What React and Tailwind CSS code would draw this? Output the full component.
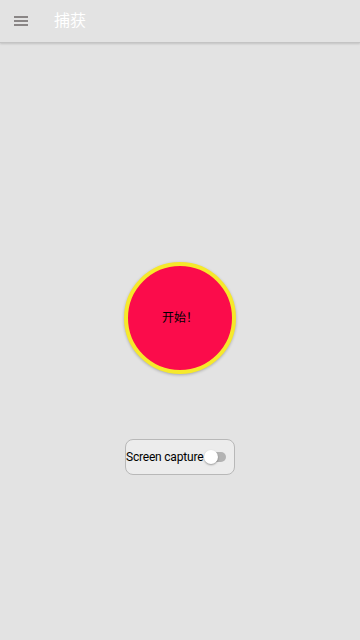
import { useState } from 'react';

export default function App() {
  const [on, setOn] = useState(false);

  return (
    <div className="w-[360px] h-[640px] bg-[#e3e3e3] flex flex-col" style={{ fontFamily: 'Roboto, "Noto Sans CJK SC", sans-serif' }}>
      {/* Header */}
      <header className="h-[43px] flex items-center border-b border-[#c4c4c4] shadow-[0_1px_2px_rgba(0,0,0,0.15)] bg-[#e3e3e3]">
        <button className="ml-[14px] w-[14px] flex flex-col gap-[2px]">
          <span className="block h-[2px] bg-[#8a8686]" />
          <span className="block h-[2px] bg-[#8a8686]" />
          <span className="block h-[2px] bg-[#8a8686]" />
        </button>
        <h1 className="ml-[26px] text-white text-[16px] leading-none">捕获</h1>
      </header>

      {/* Start button */}
      <div className="flex justify-center mt-[219px]">
        <button className="w-[112px] h-[112px] rounded-full bg-[#fb0c4b] border-[4px] border-[#f6e92b] shadow-[0_1px_3px_rgba(0,0,0,0.25)] flex items-center justify-center text-[12px] text-black">
          开始！
        </button>
      </div>

      {/* Screen capture toggle */}
      <div className="flex justify-center mt-[65px]">
        <div className="w-[110px] h-[36px] rounded-[8px] border border-[#b8b8b8] bg-[#ececec] flex items-center justify-between pr-[8px]">
          <span className="text-[12px] text-black tracking-[-0.2px]">Screen capture</span>
          <button onClick={() => setOn(!on)} className="relative w-[22px] h-[16px] flex items-center">
            <span className="block w-[20px] h-[10px] ml-[2px] rounded-full bg-[#b3b3b3]" />
            <span className="absolute left-0 top-[1px] w-[14px] h-[14px] rounded-full bg-white shadow-[0_1px_2px_rgba(0,0,0,0.35)]" />
          </button>
        </div>
      </div>
    </div>
  );
}
